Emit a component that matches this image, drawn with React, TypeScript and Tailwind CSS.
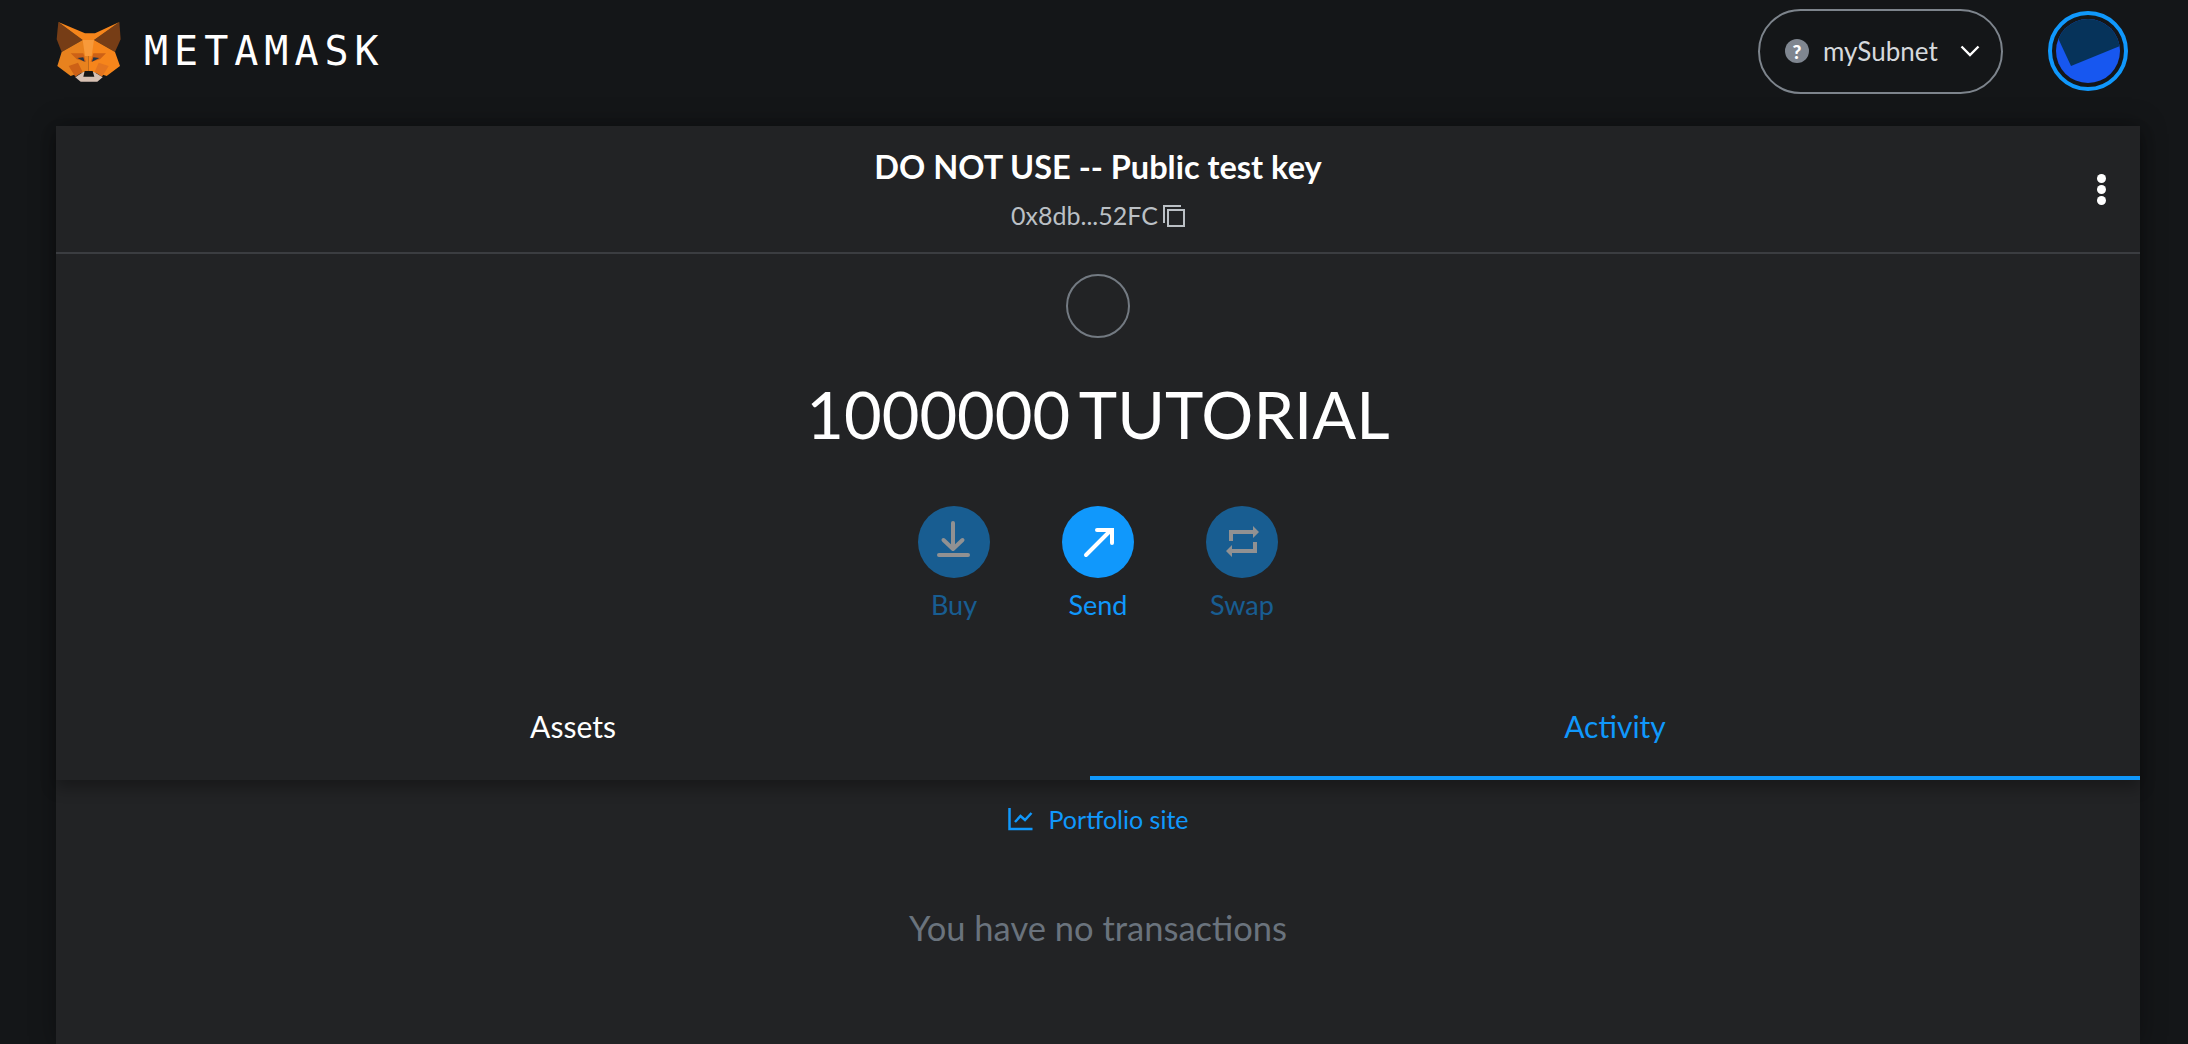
const font = { fontFamily: '"Lato", "Noto Sans", sans-serif' };

function Fox() {
  return (
    <svg viewBox="0 0 240 210" className="w-[80px] h-[70px] shrink-0 -ml-[6px]">
      <polygon points="25,18 98,72 35,108 20,70" fill="#763d16" />
      <polygon points="208,18 132,72 195,108 212,70" fill="#763d16" />
      <polygon points="25,18 105,52 135,52 208,18 132,72 98,72" fill="#f6851b" />
      <polygon points="35,108 98,72 115,72 115,168 85,172 62,180 22,150" fill="#e8821e" />
      <polygon points="195,108 132,72 115,72 115,168 145,172 170,180 210,150" fill="#f6851b" />
      <polygon points="98,72 132,72 125,120 105,120" fill="#f89a3a" />
      <polygon points="62,112 100,112 108,138 80,130" fill="#cd6116" />
      <polygon points="168,112 130,112 122,138 150,130" fill="#cd6116" />
      <polygon points="82,126 100,124 104,137" fill="#233447" />
      <polygon points="148,126 130,124 126,137" fill="#233447" />
      <polygon points="56,150 84,140 98,168 76,182" fill="#cd6116" />
      <polygon points="176,150 146,140 134,168 156,182" fill="#e4751f" />
      <polygon points="100,168 132,168 158,184 142,197 92,197 76,184" fill="#d7c1b3" />
      <polygon points="104,165 128,165 133,182 100,182" fill="#161616" />
    </svg>
  );
}

function ActionCircle({ children, label, dim }: { children: React.ReactNode; label: string; dim?: boolean }) {
  return (
    <div className={`w-[144px] flex flex-col items-center ${dim ? "opacity-50" : ""}`}>
      <div className="w-[72px] h-[72px] rounded-full bg-[#1098fc]">{children}</div>
      <div className="mt-[10px] text-[27px] leading-[34px] text-[#1098fc]">{label}</div>
    </div>
  );
}

export default function App() {
  return (
    <div style={font} className="w-[2188px] h-[1044px] overflow-hidden bg-[#141618] text-white flex flex-col">
      <header className="h-[126px] shrink-0 flex items-center pl-[56px] pr-[60px] pb-[24px]">
        <Fox />
        <span className="ml-[14px] font-['DejaVu_Sans_Mono',monospace] text-[40px] tracking-[6px] text-white leading-none">METAMASK</span>
        <div className="ml-auto w-[245px] h-[85px] rounded-full border-2 border-[#7d848c] flex items-center pl-[25px]">
          <span className="w-[24px] h-[24px] rounded-full bg-[#7f8690] text-white text-[19px] font-black flex items-center justify-center leading-none">?</span>
          <span className="ml-[14px] text-[26px] text-[#d6d9dc]">mySubnet</span>
          <svg viewBox="0 0 20 12" className="ml-[22px] w-[20px] h-[12px]"><path d="M1.5 1.5 10 10 18.5 1.5" fill="none" stroke="#fff" strokeWidth="2.4" /></svg>
        </div>
        <div className="ml-[45px] w-[80px] h-[80px] rounded-full border-4 border-[#1098fc] flex items-center justify-center">
          <svg viewBox="0 0 64 64" className="w-[64px] h-[64px] rounded-full">
            <rect width="64" height="64" fill="#1757f0" />
            <polygon points="2,19 15,47 64,27 64,0 0,0" fill="#06335a" />
          </svg>
        </div>
      </header>

      <main className="ml-[56px] mr-[48px] flex-1 bg-[#222325] shadow-[0_0_24px_rgba(0,0,0,0.35)] flex flex-col">
        <section className="relative z-10 bg-[#222325] shadow-[0_8px_14px_rgba(0,0,0,0.3)]">
          <div className="h-[128px] border-b-2 border-[#3b3d41] grid grid-cols-[1fr_auto_1fr] items-center">
            <div />
            <div className="flex flex-col items-center">
              <div className="text-[32.5px] leading-[40px] font-bold text-white">DO NOT USE -- Public test key</div>
              <div className="mt-[12px] flex items-center text-[25px] leading-[32px] text-[#bbc0c5]">
                0x8db...52FC
                <svg viewBox="0 0 22 22" className="ml-[5px] mt-[2px] w-[22px] h-[22px]" fill="none" stroke="#bbc0c5" strokeWidth="2">
                  <path d="M1 18V1h17" />
                  <rect x="5" y="5" width="16" height="16" />
                </svg>
              </div>
            </div>
            <div className="flex flex-col items-end pr-[34px] gap-[2px]">
              <span className="w-[9px] h-[9px] rounded-full bg-white" />
              <span className="w-[9px] h-[9px] rounded-full bg-white" />
              <span className="w-[9px] h-[9px] rounded-full bg-white" />
            </div>
          </div>

          <div className="flex flex-col items-center pt-[20px]">
            <div className="w-[64px] h-[64px] rounded-full border-2 border-[#737a82]" />
            <div className="mt-[34px] text-[65px] [word-spacing:-6px] leading-[84px] text-white">1000000 TUTORIAL</div>
            <div className="mt-[50px] flex">
              <ActionCircle label="Buy" dim>
                <svg viewBox="0 0 72 72" className="w-[72px] h-[72px]" fill="none" stroke="#fff" strokeWidth="4" strokeLinecap="round" strokeLinejoin="round">
                  <path d="M35 17V42M25.500 34 35 43 44.500 34M21 49H50" />
                </svg>
              </ActionCircle>
              <ActionCircle label="Send">
                <svg viewBox="0 0 72 72" className="w-[72px] h-[72px]" fill="none" stroke="#fff" strokeWidth="4" strokeLinecap="round">
                  <path d="M24 49 49 24M35 24H50V37" />
                </svg>
              </ActionCircle>
              <ActionCircle label="Swap" dim>
                <svg viewBox="0 0 72 72" className="w-[72px] h-[72px]" fill="none" stroke="#fff" strokeWidth="4">
                  <path d="M25 35V26H48M49 36V45H26" />
                  <path d="M47 20 53 26 47 32ZM26 39 20 45 26 51Z" fill="#fff" stroke="none" />
                </svg>
              </ActionCircle>
            </div>
          </div>

          <div className="mt-[50px] flex h-[108px] text-[30px]">
            <div className="w-[1034px] flex items-center justify-center text-white">Assets</div>
            <div className="flex-1 flex items-center justify-center text-[#1098fc] border-b-4 border-[#1098fc] pt-[4px]">Activity</div>
          </div>
        </section>

        <div className="flex flex-col items-center pt-[23px]">
          <div className="flex items-center text-[25px] leading-[32px] text-[#1098fc]">
            <svg viewBox="0 0 25 23" className="w-[25px] h-[23px]" fill="none" stroke="#1098fc" strokeWidth="2.5">
              <path d="M1.500 0V21H24.500" />
              <path d="M7 14 12.500 8 17 12 23.500 5" />
            </svg>
            <span className="ml-[16px]">Portfolio site</span>
          </div>
          <div className="mt-[71px] text-[34.5px] leading-[44px] text-[#6a737d]">You have no transactions</div>
        </div>
      </main>
    </div>
  );
}
